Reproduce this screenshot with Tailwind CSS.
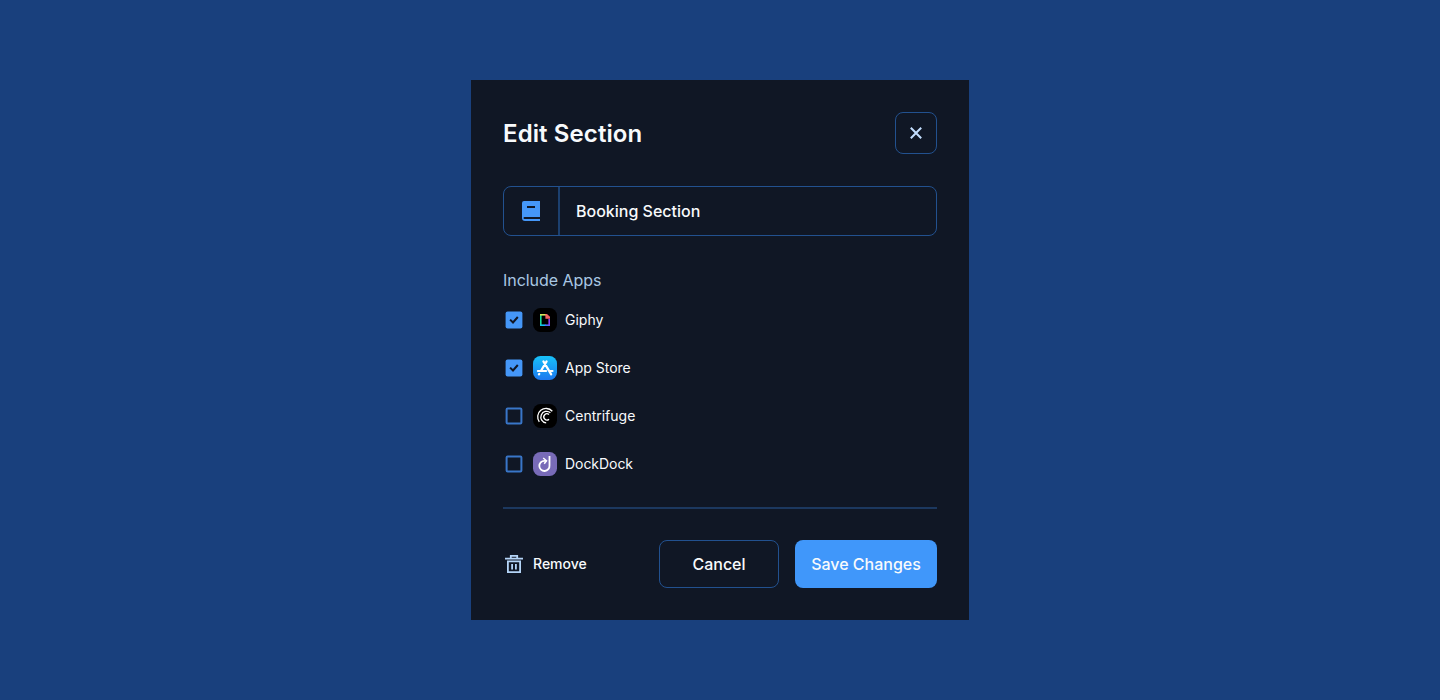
<!DOCTYPE html>
<html lang="en">
<head>
<meta charset="utf-8">
<title>Edit Section</title>
<script src="https://cdn.jsdelivr.net/npm/@tailwindcss/browser@4"></script>
</head>
<body class="flex h-screen items-center justify-center overflow-hidden bg-[#19407d] font-['Inter',sans-serif] text-[#f8fafc]">
<main class="flex h-[540px] w-[498px] flex-col bg-[#101725] p-8">
  <header class="flex h-[42px] items-center justify-between">
    <h1 class="pt-0.5 text-2xl font-semibold tracking-[0.1px]">Edit Section</h1>
    <button aria-label="Close" class="flex size-[42px] items-center justify-center rounded-lg border border-[#22518f]">
      <svg class="size-6" viewBox="0 0 24 24" fill="none" stroke="#c3deff" stroke-width="2"><path d="M6.8 6.8l10.4 10.4M17.2 6.8L6.8 17.2"/></svg>
    </button>
  </header>

  <div class="mt-8 flex h-[50px] rounded-lg border border-[#22518f]">
    <div class="flex w-14 items-center justify-center border-r-2 border-[#1c406f]">
      <svg class="size-6" viewBox="0 0 24 24"><path fill="#4597f8" fill-rule="evenodd" d="M5 2h16v16H5.5a1 1 0 0 0 0 2H21v2H6a3 3 0 0 1-3-3V4a2 2 0 0 1 2-2zM8 7v2h8V7z"/></svg>
    </div>
    <div class="flex items-center px-4 text-base font-medium">Booking Section</div>
  </div>

  <h2 class="mt-8 text-base leading-6 tracking-[-0.05px] text-[#a9c7e3]">Include Apps</h2>

  <ul class="mt-4 flex flex-col gap-6 text-sm leading-6">
    <li class="flex h-6 items-center">
      <svg class="ml-[-1px] size-6" viewBox="0 0 24 24"><rect x="3.6" y="3.6" width="16.8" height="16.8" rx="2" fill="#4597f8"/><path d="M8.1 11.6l2.9 2.9 4.8-5.5" fill="none" stroke="#111725" stroke-width="2"/></svg>
      <svg class="ml-[7px] size-6" viewBox="0 0 24 24"><rect width="24" height="24" rx="7.5" fill="#000"/><g fill="none" stroke-width="1.6"><path d="M7.8 6v12" stroke="#19dc9b"/><path d="M7 6.8H13" stroke="#d8e65b"/><path d="M7 17.2h5.5" stroke="#11bff0"/><path d="M12 17.2h5" stroke="#5068ff"/><path d="M16.2 17v-6" stroke="#8a3cf0"/></g><path d="M12.4 6h1.6l3 2.8v2h-4.6z" fill="#f46262"/></svg>
      <span class="ml-2">Giphy</span>
    </li>
    <li class="flex h-6 items-center">
      <svg class="ml-[-1px] size-6" viewBox="0 0 24 24"><rect x="3.6" y="3.6" width="16.8" height="16.8" rx="2" fill="#4597f8"/><path d="M8.1 11.6l2.9 2.9 4.8-5.5" fill="none" stroke="#111725" stroke-width="2"/></svg>
      <svg class="ml-[7px] size-6" viewBox="0 0 24 24"><defs><linearGradient id="store" x2="0" y2="1"><stop stop-color="#17c2fa"/><stop offset="1" stop-color="#1c78ef"/></linearGradient></defs><rect width="24" height="24" rx="7.5" fill="url(#store)"/><g fill="none" stroke="#fff" stroke-width="2.2" stroke-linecap="round"><path d="M13.6 5.4L8 14.8M6.3 17.8l-.4.6M10.4 5.4l7.8 13M4.9 15h8.2M17 15h2.5"/></g></svg>
      <span class="ml-2">App Store</span>
    </li>
    <li class="flex h-6 items-center">
      <svg class="ml-[-1px] size-6" viewBox="0 0 24 24"><rect x="4.6" y="4.6" width="14.8" height="14.8" rx="1" fill="none" stroke="#3976c8" stroke-width="2"/></svg>
      <svg class="ml-[7px] size-6" viewBox="0 0 24 24"><rect width="24" height="24" rx="7.5" fill="#000"/><g fill="none" stroke="#fff" stroke-width="1.3"><path d="M19.3 7.2A8.4 8.4 0 0 0 6.3 17.8"/><path d="M17.4 8.7A5.8 5.8 0 1 0 13.2 18.9"/><path d="M16 10.6a3.1 3.1 0 1 0 0 4.6"/></g></svg>
      <span class="ml-2">Centrifuge</span>
    </li>
    <li class="flex h-6 items-center">
      <svg class="ml-[-1px] size-6" viewBox="0 0 24 24"><rect x="4.6" y="4.6" width="14.8" height="14.8" rx="1" fill="none" stroke="#3976c8" stroke-width="2"/></svg>
      <svg class="ml-[7px] size-6" viewBox="0 0 24 24"><rect width="24" height="24" rx="7.5" fill="#786bb8"/><g fill="none" stroke="#fff" stroke-width="1.8"><path d="M16.5 4v9.4a5.1 5.1 0 1 1-5.1-4.6h2"/><path d="M10.2 6l3.3 2.8-2.3 3" stroke-width="1.5"/></g></svg>
      <span class="ml-2 tracking-[-0.05px]">DockDock</span>
    </li>
  </ul>

  <hr class="mt-[31px] border-t-2 border-[#1c385f]">

  <footer class="mt-[31px] flex h-12 items-center">
    <button class="flex items-center text-sm font-medium">
      <svg class="ml-[-1px] mr-[7px] size-6" viewBox="0 0 24 24" fill="none" stroke="#b4d4f7" stroke-width="1.8"><path d="M3 6.6h18M8.8 6V3.9h6.4V6M5.9 9.4h12.2v10.8H5.9zM10.1 12v5.4M13.9 12v5.4"/></svg>
      Remove
    </button>
    <button class="ml-auto h-12 w-[120px] rounded-lg border border-[#22518f] text-base font-medium">Cancel</button>
    <button class="ml-4 h-12 w-[142px] rounded-lg bg-[#4097fa] text-base font-medium">Save Changes</button>
  </footer>
</main>
</body>
</html>
